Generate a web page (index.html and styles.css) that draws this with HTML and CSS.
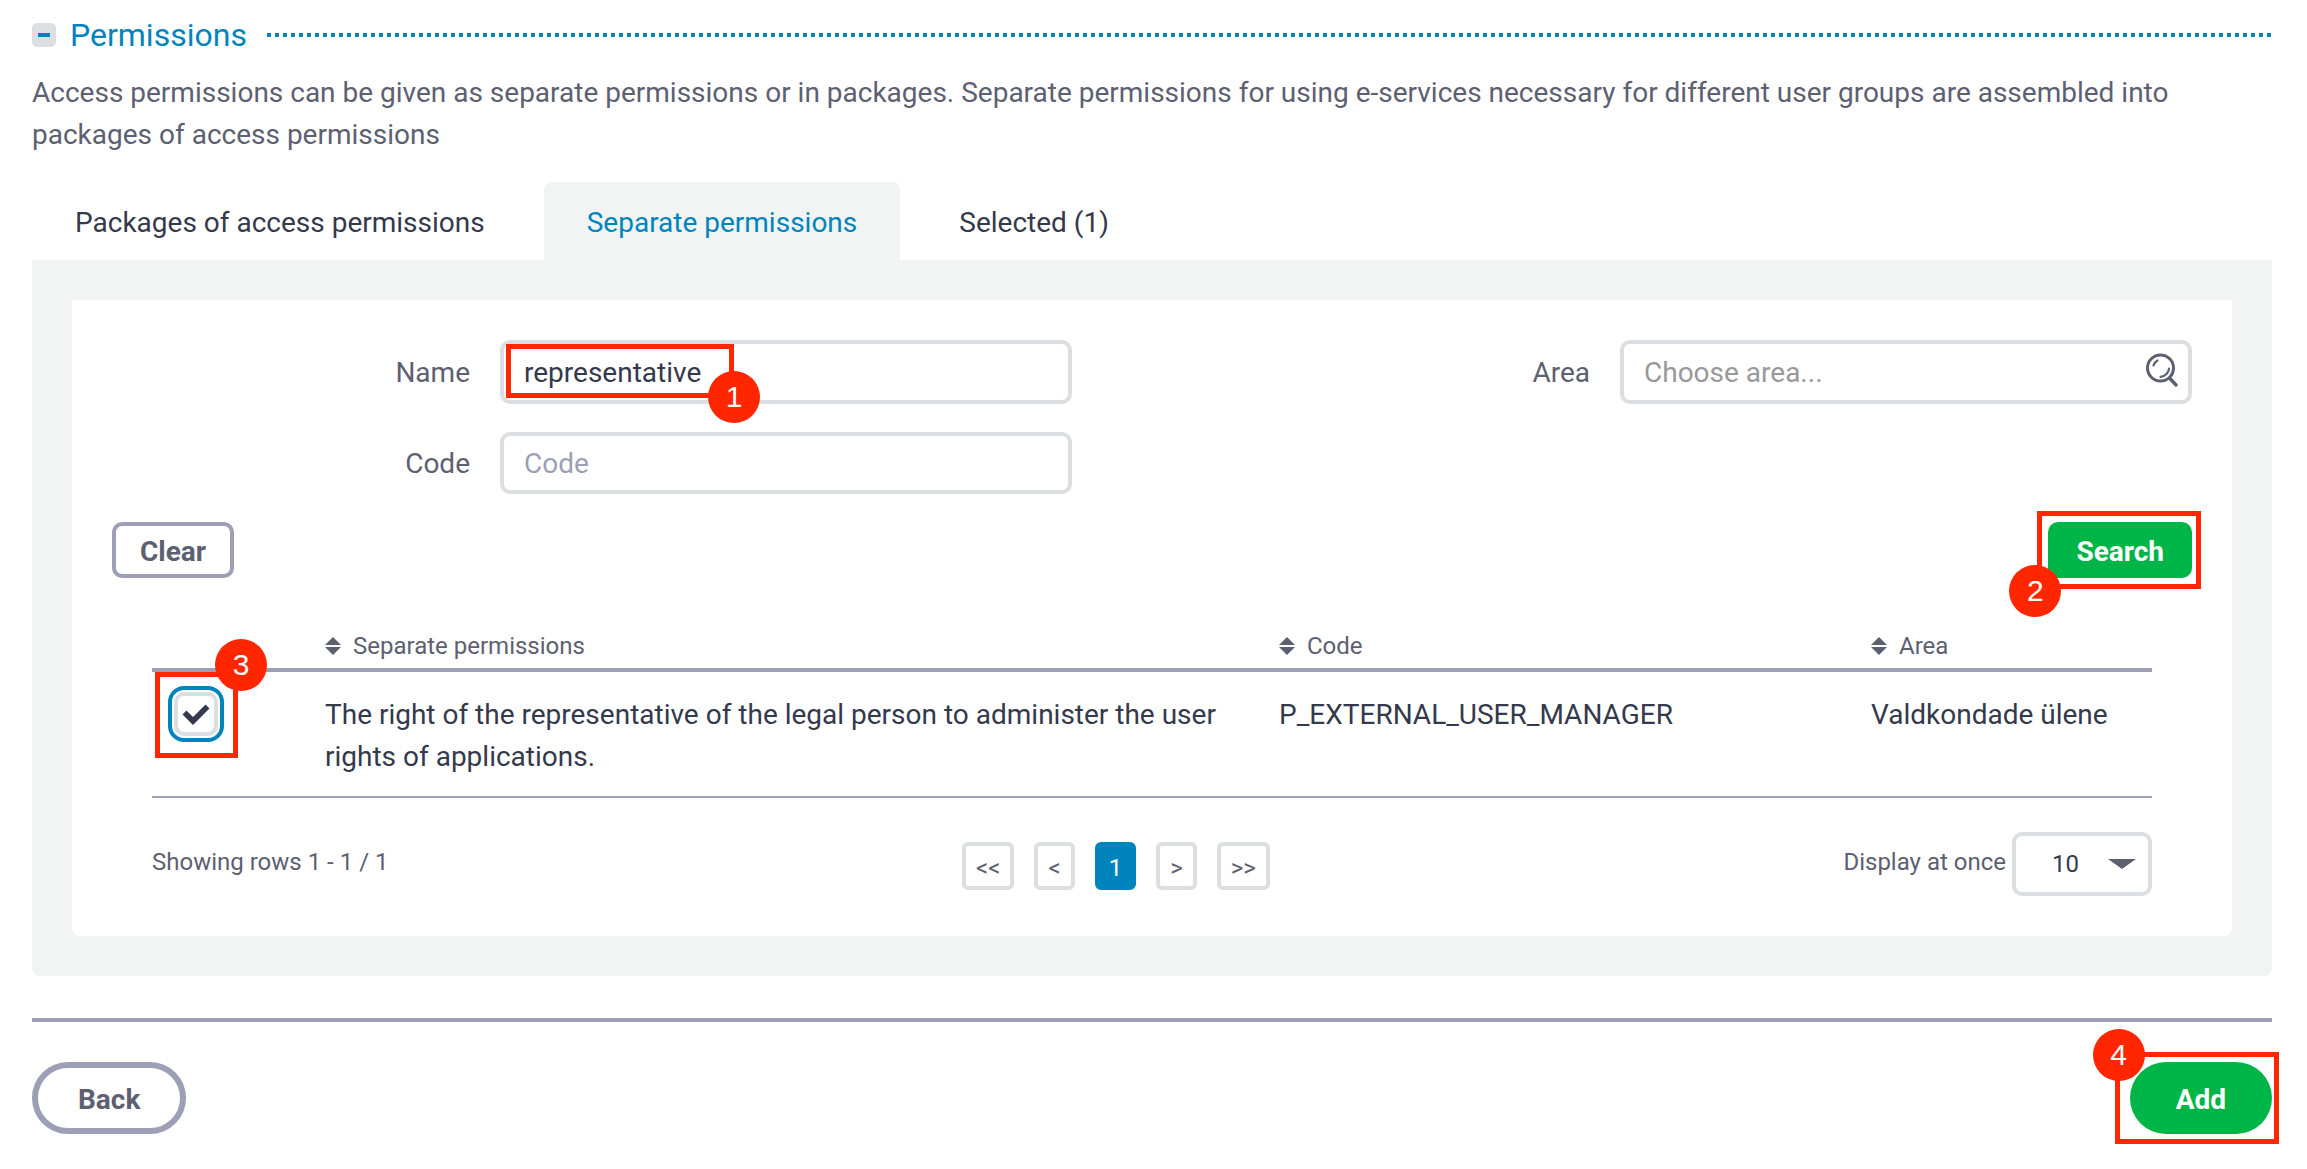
FILE: index.html
```html
<!DOCTYPE html>
<html lang="en">
<head>
<meta charset="utf-8">
<meta name="viewport" content="width=device-width, initial-scale=1">
<title>Permissions</title>
<link rel="stylesheet" href="styles.css">
</head>
<body>
<main class="page">
  <header class="section-head">
    <button class="toggle" type="button" aria-label="Collapse section"><span class="toggle-bar"></span></button>
    <h1 class="section-title">Permissions</h1>
    <span class="section-rule"></span>
  </header>
  <p class="intro">Access permissions can be given as separate permissions or in packages. Separate permissions for using e-services necessary for different user groups are assembled into packages of access permissions</p>

  <nav class="tabs">
    <a class="tab" href="#packages">Packages of access permissions</a>
    <a class="tab tab-active" href="#separate">Separate permissions</a>
    <a class="tab" href="#selected">Selected (1)</a>
  </nav>

  <section class="panel" id="separate">
    <form class="card">
      <div class="fields">
        <div class="field">
          <label class="label" for="name">Name</label>
          <div class="control">
            <input class="input" id="name" type="text" value="representative">
            <span class="mark mark-name"><span class="badge badge-end">1</span></span>
          </div>
        </div>
        <div class="field">
          <label class="label" for="area">Area</label>
          <div class="control">
            <input class="input input-lookup" id="area" type="text" placeholder="Choose area...">
            <svg class="lookup-icon" viewBox="0 0 32 34" fill="none" stroke="currentColor" stroke-linecap="round"><circle cx="14.500" cy="15" r="13" stroke-width="3"/><path d="M24 25.500l6 6.500" stroke-width="3.400"/><path d="M7.500 12.500c.6-2 2-4 4-5M23 15.500c-.3 4-3.500 8-8.500 8.300" stroke-width="2.200"/></svg>
          </div>
        </div>
        <div class="field">
          <label class="label" for="code">Code</label>
          <div class="control">
            <input class="input" id="code" type="text" placeholder="Code">
          </div>
        </div>
      </div>

      <div class="actions">
        <button class="btn btn-outline" type="button">Clear</button>
        <div class="marked">
          <button class="btn btn-primary" type="button">Search</button>
          <span class="mark mark-search"><span class="badge badge-start">2</span></span>
        </div>
      </div>

      <div class="results">
        <table class="table">
          <colgroup><col class="col-check"><col class="col-name"><col class="col-code"><col class="col-area"></colgroup>
          <thead>
            <tr>
              <th aria-label="Select"></th>
              <th><span class="sort"><svg class="sort-icon" viewBox="0 0 16 18" fill="currentColor"><path d="M8 0l8 8H0zM8 18l8-8H0z"/></svg>Separate permissions</span></th>
              <th><span class="sort"><svg class="sort-icon" viewBox="0 0 16 18" fill="currentColor"><path d="M8 0l8 8H0zM8 18l8-8H0z"/></svg>Code</span></th>
              <th><span class="sort"><svg class="sort-icon" viewBox="0 0 16 18" fill="currentColor"><path d="M8 0l8 8H0zM8 18l8-8H0z"/></svg>Area</span></th>
            </tr>
          </thead>
          <tbody>
            <tr>
              <td class="cell-check">
                <div class="check">
                  <input class="check-input" type="checkbox" checked aria-label="Select permission">
                  <svg class="check-icon" viewBox="0 0 28 22"><path d="M2.500 9.500l8.500 8.500L25.500 3.500" fill="none" stroke="currentColor" stroke-width="5.600"/></svg>
                  <span class="mark mark-check"><span class="badge badge-top">3</span></span>
                </div>
              </td>
              <td class="cell-name">The right of the representative of the legal person to administer the user rights of applications.</td>
              <td>P_EXTERNAL_USER_MANAGER</td>
              <td>Valdkondade ülene</td>
            </tr>
          </tbody>
        </table>

        <div class="table-foot">
          <span class="foot-text">Showing rows 1 - 1 / 1</span>
          <div class="pager">
            <button class="page-btn" type="button">&lt;&lt;</button>
            <button class="page-btn" type="button">&lt;</button>
            <button class="page-btn page-current" type="button">1</button>
            <button class="page-btn" type="button">&gt;</button>
            <button class="page-btn" type="button">&gt;&gt;</button>
          </div>
          <div class="page-size">
            <label class="foot-text" for="size">Display at once</label>
            <div class="select-wrap">
              <select class="select" id="size"><option>10</option><option>20</option><option>50</option></select>
              <svg class="caret" viewBox="0 0 28 10" fill="currentColor"><path d="M0 0h28L14 10z"/></svg>
            </div>
          </div>
        </div>
      </div>
    </form>
  </section>

  <footer class="footer">
    <button class="pill pill-outline" type="button">Back</button>
    <div class="marked">
      <button class="pill pill-primary" type="button">Add</button>
      <span class="mark mark-add"><span class="badge badge-corner">4</span></span>
    </div>
  </footer>
</main>
</body>
</html>
```
FILE: styles.css
```css
:root {
  --text: #34394c;
  --muted: #5d6071;
  --blue: #0084bd;
  --green: #00b548;
  --red: #ff2600;
  --line: #9c9fb5;
  --border: #dbdfe2;
  --panel: #f1f4f3;
}

* { box-sizing: border-box; }

body {
  margin: 0;
  background: #fff;
  color: var(--text);
  font: 28px/42px Roboto, "Liberation Sans", sans-serif;
}

button, input, select { font: inherit; color: inherit; margin: 0; }

.page { padding: 8px 35px 32px 32px; }

.section-head { display: flex; align-items: center; }

.toggle {
  display: flex;
  align-items: center;
  justify-content: center;
  width: 24px;
  height: 24px;
  margin-right: 14px;
  padding: 0;
  border: 0;
  border-radius: 5px;
  background: var(--border);
}

.toggle-bar { width: 12px; height: 4px; background: var(--blue); }

.section-title {
  margin: 0 20px 0 0;
  color: var(--blue);
  font-size: 32px;
  font-weight: 400;
  line-height: 54px;
}

.section-rule {
  flex: 1;
  height: 4px;
  background: repeating-linear-gradient(90deg, var(--blue) 0 4px, transparent 4px 8px);
}

.intro { margin: 10px 0 26px; color: var(--muted); }

.tabs { display: flex; gap: 16px; }

.tab {
  padding: 20px 43px 16px;
  border-radius: 8px 8px 0 0;
  color: var(--text);
  text-decoration: none;
}

.tab-active { background: var(--panel); color: var(--blue); }

.panel {
  padding: 40px;
  border-radius: 0 0 8px 8px;
  background: var(--panel);
}

.card {
  padding: 40px;
  border-radius: 0 0 8px 8px;
  background: #fff;
}

.fields { display: grid; grid-template-columns: 1fr 1fr; gap: 28px 160px; }

.field {
  display: grid;
  grid-template-columns: 358fr 572fr;
  column-gap: 30px;
}

.label { align-self: center; padding-top: 2px; color: var(--muted); text-align: right; }

.control { position: relative; display: flex; }

.input {
  width: 100%;
  min-height: 62px;
  padding: 2px 20px 0;
  border: 4px solid var(--border);
  border-radius: 10px;
  background: #fff;
}

.input::placeholder { color: var(--line); opacity: 1; }
.input-lookup { min-height: 64px; padding-right: 60px; }
.input-lookup::placeholder { color: #999; }

.lookup-icon {
  position: absolute;
  top: 13px;
  right: 14px;
  width: 32px;
  height: 34px;
  color: var(--muted);
}

.actions { display: flex; justify-content: space-between; margin-top: 28px; }

.marked { position: relative; }

.btn {
  display: block;
  min-height: 56px;
  padding: 4px 28px 0;
  border: 0;
  border-radius: 10px;
  font-weight: 700;
}

.btn-outline {
  padding: 4px 24px 0;
  border: 4px solid var(--line);
  background: #fff;
  color: var(--muted);
}

.btn-primary { background: var(--green); color: #fff; }

.results { padding: 42px 40px 0; }

.table { width: 100%; border-collapse: separate; border-spacing: 0; table-layout: fixed; }

.col-check { width: 173px; }
.col-name { width: 954px; }
.col-code { width: 592px; }

.table th {
  padding: 6px 0 2px;
  border-bottom: 4px solid var(--line);
  color: var(--muted);
  font-size: 24px;
  font-weight: 400;
  line-height: 40px;
  text-align: left;
}

.table td {
  padding: 22px 0 18px;
  border-bottom: 2px solid var(--line);
  vertical-align: top;
}

.table td.cell-check { padding: 20px 0; }
.table td.cell-name { padding-right: 48px; }

.sort { display: flex; align-items: center; gap: 12px; }
.sort-icon { width: 16px; height: 18px; }

.check {
  position: relative;
  display: grid;
  place-items: center;
  width: 44px;
  height: 44px;
  margin-left: 22px;
}

.check-input {
  appearance: none;
  grid-area: 1 / 1;
  width: 44px;
  height: 44px;
  border: 4px solid var(--border);
  border-radius: 10px;
  outline: 4px solid var(--blue);
  outline-offset: 2px;
  background: #fff;
}

.check-icon { grid-area: 1 / 1; z-index: 1; width: 28px; height: 22px; color: var(--text); pointer-events: none; }

.table-foot {
  display: flex;
  align-items: center;
  justify-content: space-between;
  padding-top: 34px;
  font-size: 24px;
}

.foot-text { color: var(--muted); line-height: 32px; padding-bottom: 4px; }

.pager { display: flex; gap: 20px; padding-top: 4px; }

.page-btn {
  min-height: 48px;
  padding: 4px 10px 0;
  border: 4px solid var(--border);
  border-radius: 6px;
  background: #fff;
  color: var(--muted);
  line-height: 36px;
}

.page-current { border-color: var(--blue); background: var(--blue); color: #fff; }

.page-size { display: flex; align-items: center; gap: 6px; }

.select-wrap { position: relative; }

.select {
  display: block;
  appearance: none;
  width: 140px;
  min-height: 64px;
  padding: 0 36px;
  border: 4px solid var(--border);
  border-radius: 10px;
  background: #fff;
}

.caret {
  position: absolute;
  top: 27px;
  right: 16px;
  width: 28px;
  height: 10px;
  color: var(--muted);
  pointer-events: none;
}

.footer {
  display: flex;
  justify-content: space-between;
  margin-top: 42px;
  padding-top: 40px;
  border-top: 4px solid var(--line);
}

.pill {
  display: block;
  min-height: 72px;
  padding: 4px 46px 0;
  border: 0;
  border-radius: 36px;
  font-weight: 700;
}

.pill-outline {
  padding: 4px 40px 0;
  border: 6px solid var(--line);
  background: #fff;
  color: var(--muted);
}

.pill-primary { background: var(--green); color: #fff; }

/* Numbered step callouts laid over the controls */
.mark { position: absolute; z-index: 2; border: 5px solid var(--red); pointer-events: none; }

.mark-name { top: 4px; left: 6px; width: 228px; height: 54px; }
.mark-search { inset: -11px -9px -11px -11px; }
.mark-check { inset: -20px -20px -22px -19px; }
.mark-add { inset: -10px -7px -10px -15px; }

.badge {
  position: absolute;
  width: 52px;
  height: 52px;
  border-radius: 50%;
  background: var(--red);
  color: #fff;
  font: 30px/52px "Liberation Sans", sans-serif;
  text-align: center;
}

.badge-end { right: -31px; bottom: -30px; }
.badge-start { left: -33px; bottom: -33px; }
.badge-top { top: -38px; right: -34px; }
.badge-corner { top: -28px; left: -27px; }
```
